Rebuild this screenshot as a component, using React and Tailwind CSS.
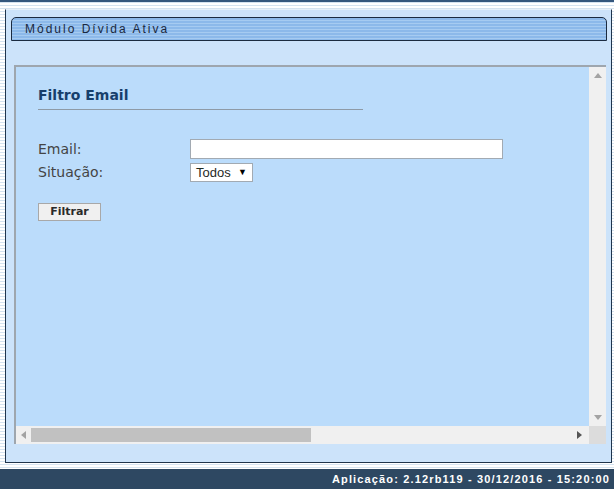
import React from "react";

const stripes =
  "bg-[repeating-linear-gradient(180deg,#ffffff_0px,#ffffff_2px,#d5e3f0_2px,#d5e3f0_3px)]";

const Arrow = ({ dir, className }) => {
  const pts = {
    up: "0,5 4,0 8,5",
    down: "0,0 8,0 4,5",
    left: "5,0 5,8 0,4",
    right: "0,0 0,8 5,4",
  }[dir];
  const box = dir === "up" || dir === "down" ? "0 0 8 5" : "0 0 5 8";
  const w = dir === "up" || dir === "down" ? 8 : 5;
  const h = dir === "up" || dir === "down" ? 5 : 8;
  return (
    <svg width={w} height={h} viewBox={box} className={className}>
      <polygon points={pts} fill="currentColor" />
    </svg>
  );
};

export default function App() {
  return (
    <div className={`w-[614px] h-[490px] overflow-hidden flex flex-col ${stripes}`}>
      <div className="h-[2px] bg-[#34577d]" />
      <div className="h-[7px]" />

      {/* painel principal */}
      <div className="ml-[5px] mr-[2px] h-[454px] bg-[#cce3fa] border-x border-b border-t border-[#1f344c] border-t-[#e6f0fa] flex flex-col">
        <div className="mt-[7px] ml-[5px] mr-[4px] h-[24px] rounded-t-[5px] border border-[#1b2b40] bg-[repeating-linear-gradient(180deg,#8cb9ea_0px,#8cb9ea_2px,#a6cbf1_2px,#a6cbf1_3px)] flex items-center pl-[13px]">
          <span className="font-['Liberation_Sans',Arial,sans-serif] text-[12px] tracking-[2px] text-[#1a2840]">
            Módulo Dívida Ativa
          </span>
        </div>

        {/* frame interno */}
        <div className="mt-[24px] ml-[8px] mr-[5px] h-[379px] border-t-2 border-l-2 border-[#9ea6ae] bg-[#bbdcfb] flex flex-col">
          <div className="flex-1 flex min-h-0">
            <div className="flex-1 pl-[22px] pt-[20px] font-['DejaVu_Sans',Verdana,sans-serif]">
              <div className="text-[14px] leading-[17px] font-bold text-[#173f6c]">Filtro Email</div>
              <div className="mt-[5px] w-[325px] h-[1px] bg-[#8e9aa6]" />

              <div className="mt-[29px] grid grid-cols-[152px_auto] gap-y-[4px] items-center">
                <div className="text-[14px] leading-[20px] text-[#444]">Email:</div>
                <div className="w-[313px] h-[20px] bg-white border border-[#a2aab2]" />
                <div className="text-[14px] leading-[19px] text-[#444]">Situação:</div>
                <div className="w-[63px] h-[19px] bg-white border border-[#a2aab2] flex items-center pl-[5px] pr-[5px] justify-between font-['Liberation_Sans',Arial,sans-serif]">
                  <span className="text-[13px] text-[#1f2a1f]">Todos</span>
                  <span className="text-[9px] text-black">▼</span>
                </div>
              </div>

              <div className="mt-[21px] w-[63px] h-[18px] bg-[#f0f0f0] border border-[#a8a8a8] flex items-center justify-center text-[11px] font-bold text-[#2a2a2a]">
                Filtrar
              </div>
            </div>

            {/* barra vertical */}
            <div className="w-[17px] bg-[#f0f0f0] flex flex-col items-center justify-between py-[6px] text-[#a3a3a3]">
              <Arrow dir="up" />
              <Arrow dir="down" />
            </div>
          </div>

          {/* barra horizontal */}
          <div className="h-[18px] flex">
            <div className="flex-1 bg-[#f0f0f0] flex items-center">
              <Arrow dir="left" className="ml-[5px] text-[#a3a3a3]" />
              <div className="ml-[5px] w-[280px] h-[14px] bg-[#c1c1c1]" />
              <div className="flex-1" />
              <Arrow dir="right" className="mr-[7px] text-[#555]" />
            </div>
            <div className="w-[17px] bg-[#dcdcdc]" />
          </div>
        </div>
      </div>

      <div className="h-[6px]" />
      <div className="h-[20px] bg-[#2e4862] flex items-center justify-end pr-[4px]">
        <span className="font-['Liberation_Sans',Arial,sans-serif] text-[11px] font-bold tracking-[1.15px] text-white">
          Aplicação: 2.12rb119 - 30/12/2016 - 15:20:00
        </span>
      </div>
    </div>
  );
}
